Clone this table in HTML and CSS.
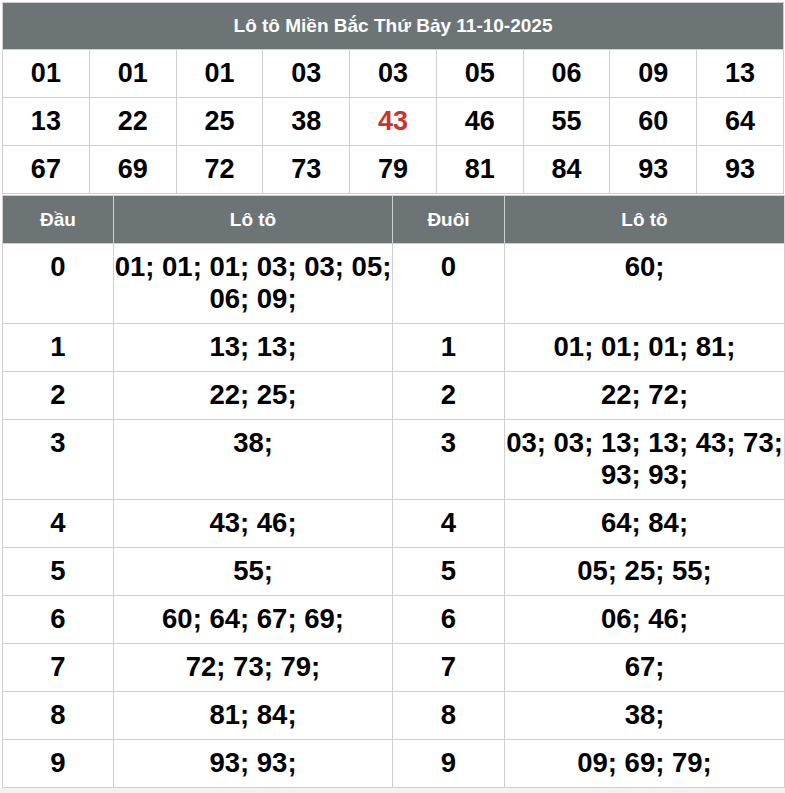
FILE: index.html
```html
<!DOCTYPE html>
<html lang="vi">
<head>
<meta charset="utf-8">
<title>Lô tô Miền Bắc</title>
<link rel="stylesheet" href="styles.css">
</head>
<body>
<div class="wrap">
<table class="kq">
  <thead>
    <tr><th colspan="9" class="title">Lô tô Miền Bắc Thứ Bảy 11-10-2025</th></tr>
  </thead>
  <tbody>
    <tr><td>01</td><td>01</td><td>01</td><td>03</td><td>03</td><td>05</td><td>06</td><td>09</td><td>13</td></tr>
    <tr><td>13</td><td>22</td><td>25</td><td>38</td><td class="red">43</td><td>46</td><td>55</td><td>60</td><td>64</td></tr>
    <tr><td>67</td><td>69</td><td>72</td><td>73</td><td>79</td><td>81</td><td>84</td><td>93</td><td>93</td></tr>
  </tbody>
</table>
<table class="dd">
  <colgroup><col class="c1"><col class="c2"><col class="c3"><col class="c4"></colgroup>
  <thead>
    <tr><th>Đầu</th><th>Lô tô</th><th>Đuôi</th><th>Lô tô</th></tr>
  </thead>
  <tbody>
    <tr><td>0</td><td>01; 01; 01; 03; 03; 05; 06; 09;</td><td>0</td><td>60;</td></tr>
    <tr><td>1</td><td>13; 13;</td><td>1</td><td>01; 01; 01; 81;</td></tr>
    <tr><td>2</td><td>22; 25;</td><td>2</td><td>22; 72;</td></tr>
    <tr><td>3</td><td>38;</td><td>3</td><td>03; 03; 13; 13; 43; 73; 93; 93;</td></tr>
    <tr><td>4</td><td>43; 46;</td><td>4</td><td>64; 84;</td></tr>
    <tr><td>5</td><td>55;</td><td>5</td><td>05; 25; 55;</td></tr>
    <tr><td>6</td><td>60; 64; 67; 69;</td><td>6</td><td>06; 46;</td></tr>
    <tr><td>7</td><td>72; 73; 79;</td><td>7</td><td>67;</td></tr>
    <tr><td>8</td><td>81; 84;</td><td>8</td><td>38;</td></tr>
    <tr><td>9</td><td>93; 93;</td><td>9</td><td>09; 69; 79;</td></tr>
  </tbody>
</table>
</div>
<div class="foot"></div>
</body>
</html>
```

FILE: styles.css
```css
html, body {
  margin: 0;
  padding: 0;
  background: #fff;
}
body {
  font-family: "Liberation Sans", Arial, sans-serif;
  color: #000;
}
.wrap {
  padding: 2px 1px 0 2px;
}
table {
  width: 782px;
  border-collapse: collapse;
  table-layout: fixed;
}
th, td {
  border: 1px solid #cfcfcf;
  text-align: center;
  font-weight: bold;
  padding: 0;
}
.kq .title {
  background: #6c7476;
  color: #fff;
  font-size: 19px;
  height: 46px;
}
.kq td {
  font-size: 27px;
  height: 47px;
}
.kq .red {
  color: #c8352b;
}
.dd {
  margin-top: 1px;
}
.dd col.c1 { width: 111px; }
.dd col.c2 { width: 279px; }
.dd col.c3 { width: 112px; }
.dd col.c4 { width: 280px; }
.dd th {
  background: #6c7476;
  color: #fff;
  font-size: 19px;
  height: 47px;
}
.dd td {
  font-size: 27.5px;
  line-height: 32px;
  vertical-align: top;
  padding: 7px 0 8px;
}
.foot {
  height: 6px;
  background: #f2f2f2;
}
```
